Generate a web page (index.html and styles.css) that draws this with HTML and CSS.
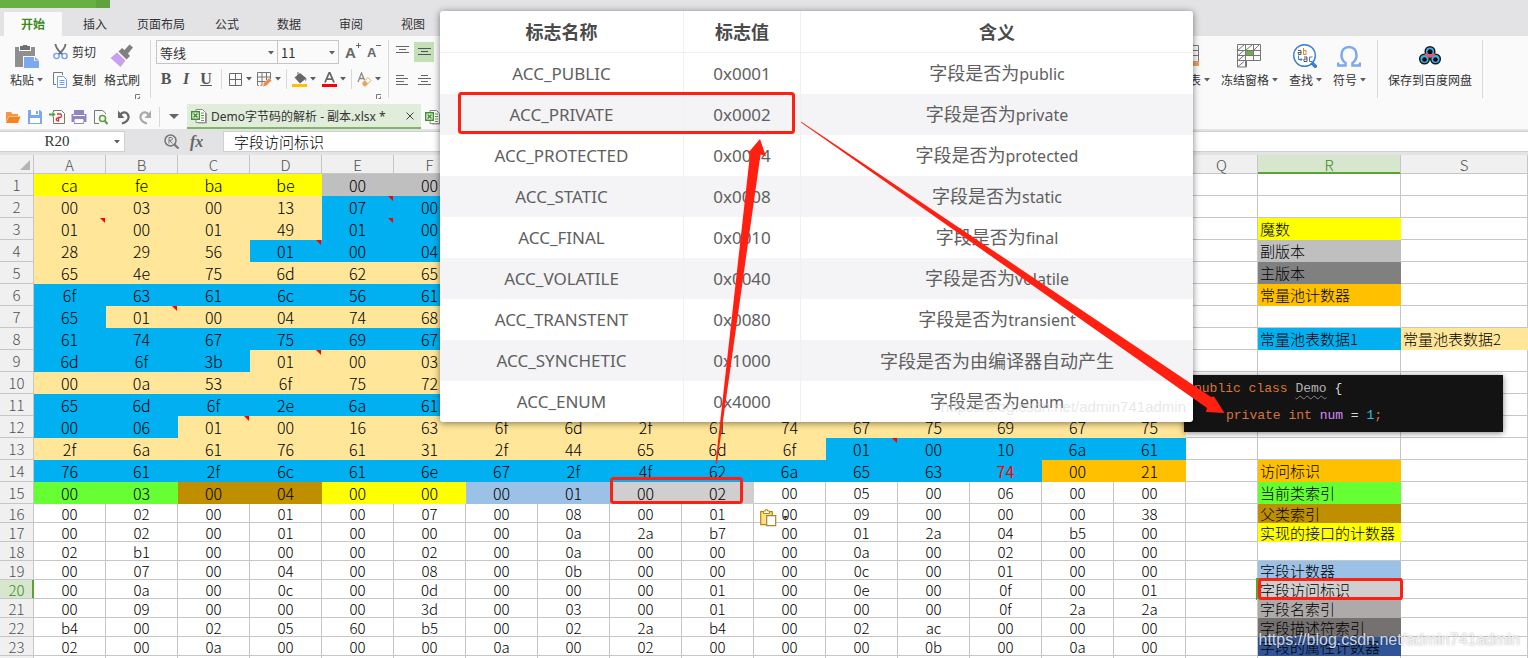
FILE: index.html
```html
<!DOCTYPE html>
<html lang="zh-CN">
<head>
<meta charset="utf-8">
<title>Demo字节码的解析 - 副本.xlsx</title>
<link rel="stylesheet" href="styles.css">
</head>
<body>
<svg class="defs" width="0" height="0" aria-hidden="true">
  <symbol id="caret" viewBox="0 0 6 4"><path d="M0 0h6L3 3.500z" fill="#5f5f5f"/></symbol>
  <symbol id="launcher" viewBox="0 0 5 5"><path d="M.5 5V.5H5M2.500 4.500h2v-2" fill="none" stroke="#777"/></symbol>
  <symbol id="xls" viewBox="0 0 16 16">
    <path d="M5 1.500h6.500l3 3v10H5z" fill="#fff" stroke="#8a8a8a"/>
    <path d="M7 15h8.500V5" fill="none" stroke="#9a9a9a"/>
    <path d="M10 5h3M10 7.500h3M10 10h3M10 12.500h3" stroke="#6a9a5a"/>
    <path d="M.7 3.700h7.600v7.600H.7z" fill="#fff" stroke="#3f8f2f" stroke-width="1.400"/>
    <path d="M2.500 5.500l4 4M6.500 5.500l-4 4" stroke="#3f8f2f" stroke-width="1.600"/>
  </symbol>
</svg>

<header class="app">
  <div class="titlebar"><span class="brand"></span><span class="brand-menu"></span></div>
  <nav class="tabs">
    <button class="tab tab-active">开始</button>
    <button class="tab">插入</button>
    <button class="tab">页面布局</button>
    <button class="tab">公式</button>
    <button class="tab">数据</button>
    <button class="tab">审阅</button>
    <button class="tab">视图</button>
  </nav>

  <div class="ribbon">
    <div class="group clipboard">
      <button class="big">
        <svg width="26" height="24" viewBox="0 0 26 24"><path d="M1 3h4v4h12V3h4v9H9v11H1z" fill="#8f8f8f"/><path d="M6 2h3V1h4v1h3v4H6z" fill="#6f6f6f"/><path d="M10 13h10v4h5v7H10z" fill="#7da7ee"/><path d="M21 13l4 3.500h-4z" fill="#7da7ee"/></svg>
        <span class="label">粘贴<svg class="caret"><use href="#caret"/></svg></span>
      </button>
      <div class="stack">
        <button class="small">
          <svg width="15" height="16" viewBox="0 0 15 16"><path d="M2.500 0C2.500 3 5 6.500 9.500 10.500M12.500 0C12.500 3 10 6.500 5.500 10.500" fill="none" stroke="#6b6b6b" stroke-width="1.800"/><circle cx="3.500" cy="12" r="2.600" fill="none" stroke="#6f9fe8" stroke-width="1.400"/><circle cx="11.500" cy="12" r="2.600" fill="none" stroke="#6f9fe8" stroke-width="1.400"/></svg>
          剪切
        </button>
        <button class="small">
          <svg width="15" height="16" viewBox="0 0 15 16"><path d="M3 12.500H.5V.5h9V3" fill="none" stroke="#777"/><path d="M4.500 4.500h6l3 3v8h-9z" fill="#fff" stroke="#6f9fe8"/><path d="M6.500 8.500h5M6.500 10.500h5M6.500 12.500h5" stroke="#6f9fe8"/></svg>
          复制
        </button>
      </div>
      <button class="big brush">
        <svg width="24" height="24" viewBox="0 0 24 24"><path d="M19.500.5l3.500 3-5 6 2 2.500-3.500 3.500-8-8L12 4l2.500 2z" fill="#808080"/><path d="M7 8.500l8.500 8-5 6.500L.5 14z" fill="#c9a0f0"/></svg>
        <span class="label">格式刷</span>
        <svg class="launcher"><use href="#launcher"/></svg>
      </button>
    </div>
    <span class="rule"></span>

    <div class="group font">
      <div class="fields">
        <label class="field family"><select aria-label="字体"><option>等线</option></select><svg class="caret"><use href="#caret"/></svg></label>
        <label class="field size"><select aria-label="字号"><option>11</option></select><svg class="caret"><use href="#caret"/></svg></label>
        <button class="sizer" aria-label="增大字号"><b class="glyph-lg">A</b><svg width="5" height="5" viewBox="0 0 5 5"><path d="M0 2.500h5M2.500 0v5" stroke="#666"/></svg></button>
        <button class="sizer" aria-label="减小字号"><b class="glyph-sm">A</b><svg width="5" height="5" viewBox="0 0 5 5"><path d="M0 2.500h5" stroke="#666"/></svg></button>
      </div>
      <div class="marks">
        <div class="styles">
          <button class="mark bold">B</button><button class="mark italic">I</button><button class="mark underline">U</button>
        </div>
        <span class="tick"></span>
        <button class="split" aria-label="边框"><svg width="15" height="15" viewBox="0 0 15 15"><path d="M1.500 1.500h12v12h-12zM7.500 1.500v12M1.500 7.500h12" fill="none" stroke="#666"/></svg><svg class="caret"><use href="#caret"/></svg></button>
        <button class="split" aria-label="绘图边框"><svg width="15" height="15" viewBox="0 0 15 15"><path d="M.5 14V.5h13V7M.5 5h13M.5 9.500h8M5 .5v13M9.500.5V8" fill="none" stroke="#777"/><path d="M0 13.500h5" stroke="#f08a4b" stroke-dasharray="2 1"/><path d="M6 14.500l1-3.500 5-5 2.500 2.500-5 5z" fill="#f08a4b"/></svg><svg class="caret"><use href="#caret"/></svg></button>
        <span class="tick"></span>
        <button class="split" aria-label="填充颜色"><svg width="15" height="15" viewBox="0 0 15 15"><path d="M2.500 5.500L8 1l5.500 4.500c1.500 1 1 3.500 0 4V7L8 11.500z" fill="#666"/><path d="M6 0v4" stroke="#666"/><path d="M0 12h15v3H0z" fill="#ffc000"/></svg><svg class="caret"><use href="#caret"/></svg></button>
        <button class="split" aria-label="字体颜色"><svg width="15" height="15" viewBox="0 0 15 15"><path d="M3 10.500L7.500 0 12 10.500M4.500 7.200h6" fill="none" stroke="#666" stroke-width="1.800"/><path d="M0 12h15v3H0z" fill="red"/></svg><svg class="caret"><use href="#caret"/></svg></button>
        <span class="tick"></span>
        <button class="split" aria-label="清除"><svg width="15" height="15" viewBox="0 0 15 15"><path d="M1 10L4.500 1 7.500 8M2.500 6.500h4" fill="none" stroke="#8a8a8a" stroke-width="1.300"/><path d="M5.500 11L11 5.500l3 3L8.500 14H7z" fill="#fff" stroke="#eaa45c"/><path d="M5.500 11L8 8.500l3 3L8.500 14H7z" fill="#eaa45c"/></svg><svg class="caret"><use href="#caret"/></svg></button>
      </div>
      <svg class="launcher"><use href="#launcher"/></svg>
    </div>
    <span class="rule"></span>

    <div class="group align">
      <button class="cell-btn" aria-label="顶端对齐"><svg width="13" height="12" viewBox="0 0 13 12"><path d="M0 .5h13M3 3.500h7M0 6.500h13" stroke="#666"/></svg></button>
      <button class="cell-btn on" aria-label="垂直居中"><svg width="13" height="12" viewBox="0 0 13 12"><path d="M0 2.500h13M3 5.500h7M0 8.500h13" stroke="#555"/></svg></button>
      <button class="cell-btn" aria-label="左对齐"><svg width="13" height="12" viewBox="0 0 13 12"><path d="M0 1.500h8M0 4.500h12M0 7.500h8M0 10.500h12" stroke="#666"/></svg></button>
      <button class="cell-btn" aria-label="居中"><svg width="13" height="12" viewBox="0 0 13 12"><path d="M3 1.500h7M0 4.500h13M3 7.500h7M0 10.500h13" stroke="#666"/></svg></button>
    </div>

    <div class="group tools">
      <button class="big">
        <svg width="24" height="24" viewBox="0 0 24 24"><path d="M3 1.500h20.500V18M3 6.500h20M3 11.500h20M12.500 1v16" fill="none" stroke="#777"/><path d="M3 17h21v5H3z" fill="#eb9f66"/></svg>
        <span class="label">工作表<svg class="caret"><use href="#caret"/></svg></span>
      </button>
      <button class="big">
        <svg width="24" height="24" viewBox="0 0 24 24"><path d="M.5.5h23v16h-14v6.500h-9zM.5 6.500h23M.5 11.500h23M.5 16.500h9M8.500.5v22M16.500.5v16M1 6l6-5M9 6l6-5M17 6l5-5M1 11.500l6-5M1 16.500l6-5M1 22.500l6-5" fill="none" stroke="#777"/><path d="M9 7h7v4H9z" fill="#70ad47"/></svg>
        <span class="label">冻结窗格<svg class="caret"><use href="#caret"/></svg></span>
      </button>
      <button class="big">
        <svg width="24" height="24" viewBox="0 0 24 24"><circle cx="11.500" cy="11.500" r="10.800" fill="#fff" stroke="#3a7fd5" stroke-width="1.400"/><path d="M18.500 18.500l5 5" stroke="#3a7fd5" stroke-width="3.500"/><g fill="none"><path d="M5 6.500h3v4H5.500L5 8.500h3" stroke="#555"/><path d="M10.500 4v6.500h2.500v-4h-2.500" stroke="#e08030"/><path d="M5.500 11.500v4H9M7.500 14l1.500 1.500L7.500 17" stroke="#3a7fd5"/><path d="M11 13h3v4.500h-3v-2.500h3" stroke="#555"/><path d="M19.500 13h-3v4.500h3" stroke="#3a7fd5"/></g></svg>
        <span class="label">查找<svg class="caret"><use href="#caret"/></svg></span>
      </button>
      <button class="big">
        <svg width="24" height="24" viewBox="0 0 24 24"><path d="M1 18.500v3h7.500v-2.500C5.500 17 4.500 14 4.500 11c0-5 3-8 7.500-8s7.500 3 7.500 8c0 3-1 6-4 8v2.500H23v-3" fill="none" stroke="#7da7ee" stroke-width="2.500"/></svg>
        <span class="label">符号<svg class="caret"><use href="#caret"/></svg></span>
      </button>
    </div>
    <span class="rule"></span>
    <button class="big cloud">
      <svg width="24" height="24" viewBox="0 0 24 24"><g fill="#35b8f0" stroke="#151515" stroke-width="1.500"><circle cx="6.500" cy="15" r="4.800"/><circle cx="17.500" cy="15" r="4.800"/><circle cx="12" cy="7.500" r="4.800"/></g><path d="M7.500 9.500a5 5 0 0 0 9 0" fill="none" stroke="#ff4b64" stroke-width="2.500"/><g fill="#0b0b0b"><circle cx="6.500" cy="15.500" r="2.300"/><circle cx="17.500" cy="15.500" r="2.300"/><circle cx="12" cy="7.800" r="2.500"/></g></svg>
      <span class="label">保存到百度网盘</span>
    </button>
    <span class="rule"></span>
  </div>

  <div class="quickbar">
    <div class="quick">
      <button aria-label="打开"><svg width="16" height="16" viewBox="0 0 16 16"><path d="M1 13V3h5l1.500 2H13v2H4z" fill="#f79646"/><path d="M4 7.500h11.500L13 14H1z" fill="#f5841f"/></svg></button>
      <button aria-label="保存"><svg width="16" height="16" viewBox="0 0 16 16"><path d="M1 1h12l2 2v12H1z" fill="#7da7ee"/><path d="M4 1h8v5H4zM3 9h10v5H3z" fill="#fff"/><path d="M9 2h2v3H9z" fill="#7da7ee"/></svg></button>
      <button aria-label="输出为PDF"><svg width="16" height="16" viewBox="0 0 16 16"><path d="M4.500 3V1.500h8l3 3v10H4.500V8" fill="none" stroke="#777"/><path d="M0 5.500h4" stroke="#5a9f3c" stroke-width="2"/><path d="M3.500 2.500l3 3-3 3z" fill="#5a9f3c"/><path d="M8 5h3c2 0 2 3.500 0 3.500H9.500V12c-3 0-3-3 0-3" fill="none" stroke="#d9343a" stroke-width="1.300"/></svg></button>
      <button aria-label="打印"><svg width="16" height="16" viewBox="0 0 16 16"><path d="M3 1h10v4h2.500v8H13v2H3v-2H.5V5H3z" fill="#8f86c4"/><path d="M2 6.500h12M4 10.500h8v3H4z" fill="#fff" stroke="#fafafa"/></svg></button>
      <button aria-label="打印预览"><svg width="16" height="16" viewBox="0 0 16 16"><path d="M12.500 5V4l-3-2.500h-8v13H6" fill="none" stroke="#777"/><circle cx="9.500" cy="9.500" r="3" fill="none" stroke="#5a9f3c" stroke-width="1.500"/><path d="M11.500 11.500l3 3.500" stroke="#5a9f3c" stroke-width="2"/></svg></button>
      <button aria-label="撤消"><svg width="16" height="16" viewBox="0 0 16 16"><path d="M7 14.500c6-1.500 8-6 5.500-9.500C10.500 2.500 7 3 5 6" fill="none" stroke="#666" stroke-width="2.200"/><path d="M3 1.500V9h6.500z" fill="#666"/></svg></button>
      <button aria-label="恢复"><svg width="16" height="16" viewBox="0 0 16 16"><path d="M10 14.500C4 13 2 8.500 4.500 5 6.500 2.500 10 3 12 6" fill="none" stroke="#aaa" stroke-width="2.200"/><path d="M14 1.500V9H7.500z" fill="#aaa"/></svg></button>
    </div>
    <span class="tick"></span>
    <button class="more" aria-label="自定义"><svg width="10" height="5" viewBox="0 0 10 5"><path d="M0 0h10L5 5z" fill="#666"/></svg></button>
    <div class="doc doc-active">
      <svg width="16" height="16"><use href="#xls"/></svg>
      <span class="doc-name">Demo字节码的解析 - 副本.xlsx *</span>
      <button class="close" aria-label="关闭"><svg width="8" height="8" viewBox="0 0 8 8"><path d="M.5.5l7 7M7.500.5l-7 7" stroke="#444"/></svg></button>
    </div>
    <div class="doc"><svg width="16" height="16"><use href="#xls"/></svg></div>
  </div>

  <div class="formula-bar">
    <label class="name-box"><input type="text" value="R20" aria-label="名称框"><svg class="caret"><use href="#caret"/></svg></label>
    <div class="formula-tools">
      <svg width="15" height="15" viewBox="0 0 15 15"><circle cx="6.500" cy="6.500" r="5.500" fill="none" stroke="#777" stroke-width="1.500"/><path d="M5 9.500v-6h2c2 0 2 2.700 0 2.700H5.500L8.500 9.500" fill="none" stroke="#777"/><path d="M10.500 10.500l4 4" stroke="#777" stroke-width="2.200"/></svg>
      <button class="fx">fx</button>
    </div>
    <input class="formula" type="text" value="字段访问标识" aria-label="编辑栏">
  </div>
</header>

<main class="workspace">
  <table class="sheet" id="sheet">
    <colgroup><col class="c-head"><col span="17" class="c-byte"><col class="c-legend"><col></colgroup>
    <thead></thead>
    <tbody></tbody>
  </table>
</main>

<section class="snippet">
  <code class="line"><span class="kw">public class</span> <span class="type">Demo</span> {</code>
  <code class="line indent"><span class="kw">private int</span> <span class="var">num</span> = <span class="num">1</span><span class="kw">;</span></code>
</section>

<section class="flags">
  <table>
    <colgroup><col class="f-name"><col class="f-value"><col></colgroup>
    <thead><tr><th>标志名称</th><th>标志值</th><th>含义</th></tr></thead>
    <tbody>
      <tr><td>ACC_PUBLIC</td><td>0x0001</td><td class="meaning">字段是否为<span>public</span></td></tr>
      <tr><td>ACC_PRIVATE</td><td>0x0002</td><td class="meaning">字段是否为<span>private</span></td></tr>
      <tr><td>ACC_PROTECTED</td><td>0x0004</td><td class="meaning">字段是否为<span>protected</span></td></tr>
      <tr><td>ACC_STATIC</td><td>0x0008</td><td class="meaning">字段是否为<span>static</span></td></tr>
      <tr><td>ACC_FINAL</td><td>0x0010</td><td class="meaning">字段是否为<span>final</span></td></tr>
      <tr><td>ACC_VOLATILE</td><td>0x0040</td><td class="meaning">字段是否为<span>volatile</span></td></tr>
      <tr><td>ACC_TRANSTENT</td><td>0x0080</td><td class="meaning">字段是否为<span>transient</span></td></tr>
      <tr><td>ACC_SYNCHETIC</td><td>0x1000</td><td class="meaning">字段是否为由编译器自动产生</td></tr>
      <tr><td>ACC_ENUM</td><td>0x4000</td><td class="meaning">字段是否为<span>enum</span></td></tr>
    </tbody>
  </table>
  <span class="mark-text mark-faint">https://blog.csdn.net/admin741admin</span>
</section>

<svg class="paste-options" width="30" height="18" viewBox="0 0 30 18"><path d="M.7 2.700h11.600v13H.7z" fill="#ffe08a" stroke="#b8860b" stroke-width="1.200"/><path d="M3.500 4.500V2h2V.7h2V2h2v2.500z" fill="#fff" stroke="#b8860b"/><path d="M6.700 6.700h9v10h-9z" fill="#fff" stroke="#a8842c" stroke-width="1.200"/><path d="M23 7h5l-2.500 3z" fill="#333"/></svg>

<svg class="annotations" width="1528" height="658" viewBox="0 0 1528 658">
  <g fill="none" stroke="#ff2012" stroke-width="3">
    <rect x="459.500" y="93.500" width="334" height="39" rx="2"/>
    <rect x="611.500" y="478.500" width="130" height="24" rx="2"/>
    <rect x="1259.500" y="579.500" width="142" height="19" rx="2"/>
  </g>
  <g fill="#ff2012">
    <path d="M715.500 463.500l34.500-309-2-1.500 12-14 6 17.500-5.500-2-43.500 309z"/>
    <path d="M801 121.500l410 275.500 3-.5 10.500 16.500-18.500-1 1-4L801 122.500z"/>
  </g>
</svg>

<span class="mark-text mark-page">https://blog.csdn.net/admin741admin</span>
<script src="sheet.js"></script>
</body>
</html>
```

FILE: styles.css
```css
* {
  box-sizing: border-box;
}

body {
  margin: 0;
  height: 100vh;
  overflow: hidden;
  position: relative;
  background: #fff;
  color: #333;
  font-family: "Noto Sans CJK SC", sans-serif;
  font-size: 12px;
}

button,
input,
select {
  margin: 0;
  padding: 0;
  border: 0;
  background: none;
  color: inherit;
  font: inherit;
}

svg {
  display: block;
  flex: none;
}

.defs {
  position: absolute;
}

.caret {
  width: 6px;
  height: 4px;
}

.launcher {
  width: 5px;
  height: 5px;
  align-self: flex-end;
}

/* Title strip and tabs */

.titlebar {
  display: flex;
  height: 8px;
  background: #e3e3e5;
}

.brand {
  width: 96px;
  background: #66b142;
}

.brand-menu {
  width: 14px;
  background: #5fa33d;
}

.tabs {
  display: flex;
  align-items: stretch;
  height: 28px;
  padding: 4px 4px 0;
  background: #e3e3e5;
}

.tab {
  min-width: 62px;
  padding: 0 11px;
  line-height: 24px;
}

.tab-active {
  min-width: 58px;
  margin-right: 2px;
  background: #fafafa;
  color: #3c8a1e;
  font-weight: bold;
}

/* Ribbon */

.ribbon {
  display: flex;
  height: 68px;
  padding: 4px 45px 0 0;
  background: #fafafa;
}

.rule {
  width: 1px;
  height: 58px;
  background: #d9d9d9;
}

.tick {
  width: 1px;
  height: 20px;
  background: #d9d9d9;
}

.group {
  display: flex;
}

.clipboard {
  padding: 0 10px;
}

.big {
  display: flex;
  flex-direction: column;
  align-items: center;
  padding-top: 4px;
  white-space: nowrap;
}

.big .label {
  display: flex;
  align-items: center;
  gap: 3px;
  margin-top: 4px;
  line-height: 16px;
}

.big .launcher {
  margin-top: 6px;
}

.stack {
  display: flex;
  flex-direction: column;
  gap: 12px;
  padding: 4px 8px 0 10px;
}

.small {
  display: flex;
  align-items: center;
  gap: 4px;
  height: 16px;
  line-height: 16px;
}

.font {
  flex-direction: column;
  padding: 0 7px 0 5px;
}

.fields {
  display: flex;
  height: 24px;
}

.field {
  display: flex;
  align-items: center;
  position: relative;
  border: 1px solid #c6c6c6;
}

.field + .field {
  border-left: 0;
}

.field select {
  width: 100%;
  height: 22px;
  padding-left: 3px;
  appearance: none;
  font-size: 13px;
}

.field .caret {
  position: absolute;
  right: 3px;
  top: 10px;
}

.family {
  width: 122px;
}

.size {
  width: 61px;
}

.sizer {
  display: flex;
  margin-left: 6px;
  padding-top: 3px;
  color: #666;
  font-family: "Liberation Sans", sans-serif;
  line-height: 20px;
}

.glyph-lg {
  font-size: 15px;
}

.glyph-sm {
  font-size: 13px;
}

.marks {
  display: flex;
  align-items: center;
  justify-content: space-between;
  height: 30px;
}

.styles {
  display: flex;
}

.mark {
  width: 20px;
  color: #555;
  font-family: "Liberation Serif", serif;
  font-size: 16px;
  font-weight: bold;
  line-height: 20px;
}

.italic {
  font-style: italic;
}

.underline {
  text-decoration: underline;
}

.split {
  display: flex;
  align-items: center;
  gap: 3px;
}

.align {
  display: grid;
  grid-template-columns: 20px 20px;
  grid-template-rows: 20px 20px;
  gap: 8px 2px;
  padding: 2px 8px 0 3px;
}

.cell-btn {
  display: flex;
  align-items: center;
  justify-content: center;
}

.on {
  background: #c5e0b8;
}

.tools {
  flex: 1;
  justify-content: flex-end;
  gap: 11px;
  padding-right: 11px;
}

.cloud {
  padding-left: 10px;
  padding-right: 10px;
}

/* Quick access and document tabs */

.quickbar {
  display: flex;
  align-items: center;
  height: 25px;
  background: #fafafa;
}

.quick {
  display: flex;
  gap: 6px;
  padding: 0 6px 0 5px;
}

.more {
  padding: 0 8px 0 9px;
}

.doc {
  display: flex;
  align-items: center;
  height: 25px;
  padding: 0 4px;
  gap: 4px;
}

.doc-active {
  padding-right: 7px;
  background: #e1edda;
  border-bottom: 2px solid #80b764;
}

.doc-name {
  font-family: "Noto Sans", "Noto Sans CJK SC", sans-serif;
}

.close {
  margin-left: 16px;
}

/* Formula bar */

.formula-bar {
  display: flex;
  height: 26px;
  padding: 2px 0 3px;
  background: #e3e3e5;
}

.name-box {
  display: flex;
  align-items: center;
  width: 125px;
  padding-right: 4px;
  background: #fff;
  border: 1px solid #cfcfd4;
  border-left: 0;
}

.name-box input {
  flex: 1;
  min-width: 0;
  color: #333;
  font-family: "Liberation Serif", serif;
  font-size: 15px;
  text-align: center;
}

.formula-tools {
  display: flex;
  align-items: center;
  gap: 11px;
  width: 98px;
  padding-left: 39px;
}

.fx {
  color: #666;
  font-family: "Liberation Serif", serif;
  font-size: 16px;
  font-style: italic;
  font-weight: bold;
  line-height: 16px;
}

.formula {
  flex: 1;
  padding-left: 10px;
  background: #fff;
  border: 1px solid #cfcfd4;
  border-right: 0;
  color: #000;
  font-size: 15px;
  font-weight: 300;
}

/* Worksheet */

.workspace {
  background: #fff;
}

.sheet {
  width: 100%;
  border-collapse: separate;
  border-spacing: 0;
  table-layout: fixed;
  color: #000;
  font-weight: 300;
}

.c-head {
  width: 34px;
}

.c-byte {
  width: 72px;
}

.c-legend {
  width: 143px;
}

.sheet th,
.sheet td {
  position: relative;
  height: 22px;
  padding: 1px 0 0;
  border: solid #c6c6c6;
  border-width: 0 1px 1px 0;
  font-size: 16px;
  line-height: 20px;
  text-align: center;
  white-space: nowrap;
}

.sheet th {
  background: #f0f0f0;
  color: #505050;
  font-size: 15px;
  font-weight: 300;
}

.sheet thead th {
  height: 19px;
  line-height: 17px;
}

.sheet .short td,
.sheet .short th {
  height: 19px;
  font-size: 15px;
  line-height: 17px;
}

.sheet .plain {
  font-size: 15px;
}

.sheet .legend {
  padding-left: 2px;
  font-size: 15px;
  text-align: left;
}

.sheet thead .current {
  background: #d6e7ce;
  border-bottom-color: #59a336;
  box-shadow: inset 0 -1px #59a336;
  color: #3c8a1e;
}

.sheet tbody .current {
  background: #d6e7ce;
  border-right-color: #59a336;
  box-shadow: inset -1px 0 #59a336;
  color: #3c8a1e;
}

.corner::after {
  content: "";
  position: absolute;
  right: 3px;
  bottom: 3px;
  border: 5px solid;
  border-color: transparent #b5b5b5 #b5b5b5 transparent;
}

.sheet .y { background: #ffff00; border-color: #ffff00; }
.sheet .g { background: #bfbfbf; border-color: #bfbfbf; }
.sheet .k { background: #808080; border-color: #808080; }
.sheet .c { background: #ffe699; border-color: #ffe699; }
.sheet .b { background: #00b0f0; border-color: #00b0f0; }
.sheet .o { background: #ffc000; border-color: #ffc000; }
.sheet .n { background: #66ff33; border-color: #66ff33; }
.sheet .w { background: #bf8f00; border-color: #bf8f00; }
.sheet .l { background: #9bc2e6; border-color: #9bc2e6; }
.sheet .s { background: #d0cece; border-color: #d0cece; }
.sheet .t { background: #aeaaaa; border-color: #aeaaaa; }
.sheet .d { background: #757171; border-color: #757171; }
.sheet .v { background: #305496; border-color: #305496; }

.sheet .alert {
  color: #f00;
  font-weight: 400;
}

.note::after {
  content: "";
  position: absolute;
  top: 0;
  right: 0;
  width: 5px;
  height: 5px;
  background: #f00;
  clip-path: polygon(0 0, 100% 0, 100% 100%);
}

.selected::after {
  content: "";
  position: absolute;
  inset: -2px;
  border: 2px solid #59a336;
}

/* Floating code snippet */

.snippet {
  position: absolute;
  left: 1184px;
  top: 375px;
  width: 319px;
  padding: 0 9px 3px 10px;
  background: #131313;
  box-shadow: 0 1px 6px rgba(0, 0, 0, 0.5);
  color: #d8d8d8;
  font-family: "Liberation Mono", monospace;
  font-size: 13px;
}

.line {
  display: block;
  font: inherit;
  line-height: 27px;
  white-space: pre;
}

.indent {
  padding-left: 32px;
}

.kw {
  color: #d9743c;
}

.type {
  color: #b4b4b4;
  text-decoration: underline wavy #8a8a8a 1px;
  text-underline-offset: 3px;
}

.var {
  color: #d58cf5;
}

.num {
  color: #2ebfe0;
}

/* Floating flag table */

.flags {
  position: absolute;
  left: 440px;
  top: 11px;
  width: 753px;
  background: #fff;
  border-radius: 3px;
  box-shadow: 0 1px 7px rgba(0, 0, 0, 0.5);
  overflow: hidden;
}

.flags table {
  width: 100%;
  border-collapse: separate;
  border-spacing: 0;
  table-layout: fixed;
  color: #606060;
}

.f-name {
  width: 244px;
}

.f-value {
  width: 117px;
}

.flags th,
.flags td {
  height: 41px;
  padding: 0;
  border-right: 1px solid #f0f0f1;
  font-family: "Noto Sans", "Noto Sans CJK SC", sans-serif;
  font-size: 17px;
  line-height: 24px;
  text-align: center;
}

.flags th {
  height: 42px;
  border-bottom: 1px solid #f0f0f1;
  color: #4a4a4a;
  font-size: 18px;
}

.flags th:last-child,
.flags td:last-child {
  border-right: 0;
}

.flags tbody tr:nth-child(even) {
  background: #f4f4f6;
}

.flags .meaning {
  font-size: 18px;
}

.flags .meaning span {
  font-size: 16px;
}

.mark-text {
  position: absolute;
  font-family: "Liberation Sans", sans-serif;
  white-space: nowrap;
}

.mark-faint {
  right: 7px;
  bottom: 7px;
  color: rgba(215, 215, 215, 0.6);
  font-size: 15px;
}

.mark-page {
  right: 8px;
  bottom: 9px;
  color: rgba(255, 255, 255, 0.8);
  font-size: 16px;
  text-shadow: 0 0 2px rgba(0, 0, 0, 0.35);
}

/* Overlay drawings */

.paste-options {
  position: absolute;
  left: 760px;
  top: 509px;
}

.annotations {
  position: absolute;
  left: 0;
  top: 0;
  pointer-events: none;
}
```

FILE: sheet.js
```javascript
// Each row: bytes A..P, fill codes A..P ("." is no fill), legend text and fill.
const rows = [
  ["ca fe ba be 00 00", "yyyygg"],
  ["00 03 00 13 07 00", "ccccbb"],
  ["01 00 01 49 01 00", "ccccbb", "魔数", "y"],
  ["28 29 56 01 00 04", "cccbbb", "副版本", "g"],
  ["65 4e 75 6d 62 65", "cccccc", "主版本", "k"],
  ["6f 63 61 6c 56 61", "bbbbbb", "常量池计数器", "o"],
  ["65 01 00 04 74 68", "bccccc"],
  ["61 74 67 75 69 67", "bbbbbb", "常量池表数据1", "b"],
  ["6d 6f 3b 01 00 03", "bbbccc"],
  ["00 0a 53 6f 75 72", "cccccc"],
  ["65 6d 6f 2e 6a 61", "bbbbbb"],
  ["00 06 01 00 16 63 6f 6d 2f 61 74 67 75 69 67 75", "bbcccccccccccccc"],
  ["2f 6a 61 76 61 31 2f 44 65 6d 6f 01 00 10 6a 61", "cccccccccccbbbbb"],
  ["76 61 2f 6c 61 6e 67 2f 4f 62 6a 65 63 74 00 21", "bbbbbbbbbbbbbboo", "访问标识", "o"],
  ["00 03 00 04 00 00 00 01 00 02 00 05 00 06 00 00", "nnwwyyllss......", "当前类索引", "n"],
  ["00 02 00 01 00 07 00 08 00 01 00 09 00 00 00 38", "", "父类索引", "w"],
  ["00 02 00 01 00 00 00 0a 2a b7 00 01 2a 04 b5 00", "", "实现的接口的计数器", "y"],
  ["02 b1 00 00 00 02 00 0a 00 00 00 0a 00 02 00 00", ""],
  ["00 07 00 04 00 08 00 0b 00 00 00 0c 00 01 00 00", "", "字段计数器", "l"],
  ["00 0a 00 0c 00 0d 00 00 00 01 00 0e 00 0f 00 01", "", "字段访问标识", "s"],
  ["00 09 00 00 00 3d 00 03 00 01 00 00 00 0f 2a 2a", "", "字段名索引", "t"],
  ["b4 00 02 05 60 b5 00 02 2a b4 00 02 ac 00 00 00", "", "字段描述符索引", "d"],
  ["02 00 0a 00 00 00 0a 00 02 00 00 00 0b 00 0a 00", "", "字段的属性计数器", "v"]
];
const notes = ["E2", "A3", "E3", "D4", "B7", "D9", "C12", "L13"];
const columns = "ABCDEFGHIJKLMNOPQRS";
const covered = "GHIJKLMNOP";

function cell(tag, text, classes) {
  const el = document.createElement(tag);
  el.textContent = text || "";
  el.className = classes.filter(Boolean).join(" ");
  return el;
}

const sheet = document.getElementById("sheet");
const head = sheet.tHead.insertRow();
head.append(cell("th", "", ["corner"]));
for (const name of columns) {
  head.append(cell("th", covered.includes(name) ? "" : name, [name === "R" && "current"]));
}

rows.forEach(([bytes, fills, legend, legendFill], i) => {
  const number = i + 1;
  const tr = sheet.tBodies[0].insertRow();
  if (number > 15) tr.className = "short";
  tr.append(cell("th", String(number), [number === 20 && "current"]));
  const values = bytes.split(" ");
  for (let c = 0; c < 17; c++) {
    const ref = columns[c] + number;
    const fill = fills[c] && fills[c] !== "." ? fills[c] : "";
    tr.append(cell("td", values[c], [
      fill || "plain",
      notes.includes(ref) && "note",
      ref === "N14" && "alert"
    ]));
  }
  tr.append(cell("td", legend, ["legend", legendFill, number === 20 && "selected"]));
  tr.append(number === 8 ? cell("td", "常量池表数据2", ["legend", "c"]) : cell("td", "", []));
});

// Trailing empty row, cut by the window's lower edge.
const last = sheet.tBodies[0].insertRow();
last.className = "short";
last.append(cell("th", "", []));
for (let c = 0; c < columns.length; c++) last.append(cell("td", "", []));
```
